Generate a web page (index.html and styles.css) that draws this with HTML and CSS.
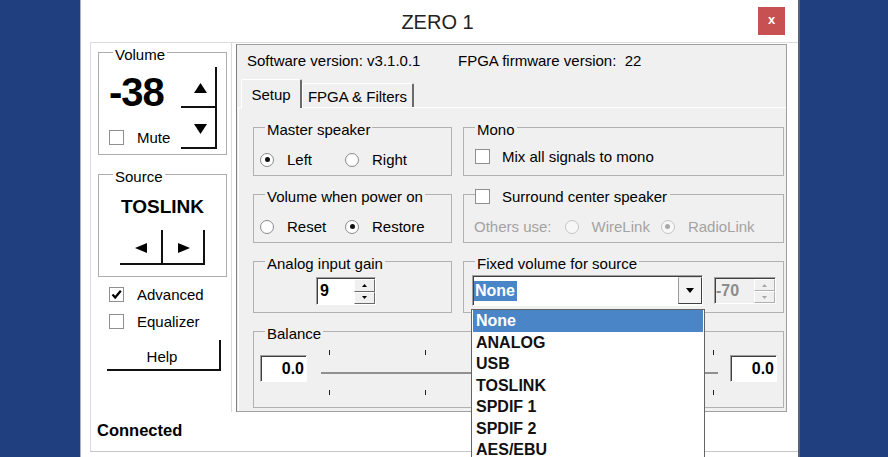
FILE: index.html
```html
<!DOCTYPE html>
<html lang="en">
<head>
<meta charset="utf-8">
<title>ZERO 1</title>
<link rel="stylesheet" href="styles.css">
</head>
<body>
<div class="window">
  <div class="titlebar">
    <div class="title">ZERO 1</div>
    <div class="close">x</div>
  </div>
  <div class="client">
    <div class="top">
      <div class="leftcol">
        <div class="lgroup volume">
          <div class="legend">Volume</div>
          <div class="vol-body">
            <div class="vol-left">
              <div class="vol-value">-38</div>
              <div class="check mute"><span class="cb"></span><span>Mute</span></div>
            </div>
            <div class="vol-btns">
              <div class="btn3d vbtn up"><svg width="13" height="10" viewBox="0 0 13 10"><polygon points="6.5,0 13,10 0,10"/></svg></div>
              <div class="btn3d vbtn down"><svg width="13" height="10" viewBox="0 0 13 10"><polygon points="0,0 13,0 6.5,10"/></svg></div>
            </div>
          </div>
        </div>
        <div class="lgroup source">
          <div class="legend">Source</div>
          <div class="src-name">TOSLINK</div>
          <div class="src-btns">
            <div class="btn3d sbtn prev"><svg width="12" height="10" viewBox="0 0 12 10"><polygon points="0,5 12,0 12,10"/></svg></div>
            <div class="btn3d sbtn next"><svg width="12" height="10" viewBox="0 0 12 10"><polygon points="0,0 12,5 0,10"/></svg></div>
          </div>
        </div>
        <div class="check adv"><span class="cb"><svg width="13" height="13" viewBox="0 0 13 13"><path d="M2.5 6.5 L5.2 9.5 L10.8 2.8" fill="none" stroke="#000" stroke-width="2.2"/></svg></span><span>Advanced</span></div>
        <div class="check eq"><span class="cb"></span><span>Equalizer</span></div>
        <div class="btn3d help">Help</div>
      </div>
      <div class="panel">
        <div class="info"><span class="sw">Software version: v3.1.0.1</span><span>FPGA firmware version:&nbsp; 22</span></div>
        <div class="tabs"><div class="tab sel">Setup</div><div class="tab">FPGA &amp; Filters</div></div>
        <div class="page">
          <div class="grid">
            <div class="group">
              <div class="legend">Master speaker</div>
              <div class="opts">
                <div class="radio w85"><span class="rb on"></span>Left</div>
                <div class="radio"><span class="rb"></span>Right</div>
              </div>
            </div>
            <div class="group">
              <div class="legend">Mono</div>
              <div class="opts mono"><span class="cb"></span><span class="cbtext">Mix all signals to mono</span></div>
            </div>
            <div class="group">
              <div class="legend">Volume when power on</div>
              <div class="opts">
                <div class="radio w85"><span class="rb"></span>Reset</div>
                <div class="radio"><span class="rb on"></span>Restore</div>
              </div>
            </div>
            <div class="group">
              <div class="legend cbl"><span class="cb"></span><span>Surround center speaker</span></div>
              <div class="opts others dis">
                <span>Others use:</span>
                <div class="radio wire"><span class="rb"></span>WireLink</div>
                <div class="radio radiol"><span class="rb on"></span>RadioLink</div>
              </div>
            </div>
            <div class="group">
              <div class="legend">Analog input gain</div>
              <div class="analog-row">
                <div class="spin">
                  <span class="spin-val">9</span>
                  <span class="spin-btns">
                    <span class="sb"><svg width="5" height="3" viewBox="0 0 5 3"><polygon points="2.5,0 5,3 0,3"/></svg></span>
                    <span class="sb"><svg width="5" height="3" viewBox="0 0 5 3"><polygon points="0,0 5,0 2.5,3"/></svg></span>
                  </span>
                </div>
              </div>
            </div>
            <div class="group">
              <div class="legend">Fixed volume for source</div>
              <div class="fixed-row">
                <div class="combo">
                  <span class="combo-val"><span class="hl">None</span></span>
                  <span class="combo-btn"><svg width="8" height="5" viewBox="0 0 8 5"><polygon points="0,0 8,0 4,5"/></svg></span>
                  <div class="droplist">
                    <div class="item sel">None</div>
                    <div class="item">ANALOG</div>
                    <div class="item">USB</div>
                    <div class="item">TOSLINK</div>
                    <div class="item">SPDIF 1</div>
                    <div class="item">SPDIF 2</div>
                    <div class="item">AES/EBU</div>
                  </div>
                </div>
                <div class="spin disabled">
                  <span class="spin-val">-70</span>
                  <span class="spin-btns">
                    <span class="sb"><svg width="5" height="3" viewBox="0 0 5 3"><polygon points="2.5,0 5,3 0,3"/></svg></span>
                    <span class="sb"><svg width="5" height="3" viewBox="0 0 5 3"><polygon points="0,0 5,0 2.5,3"/></svg></span>
                  </span>
                </div>
              </div>
            </div>
            <div class="group balance">
              <div class="legend">Balance</div>
              <div class="bal-row">
                <div class="numbox">0.0</div>
                <div class="slider">
                  <div class="ticks"><i></i><i></i><i></i><i></i><i></i></div>
                  <div class="track"></div>
                  <div class="ticks"><i></i><i></i><i></i><i></i><i></i></div>
                </div>
                <div class="numbox">0.0</div>
              </div>
            </div>
          </div>
        </div>
      </div>
    </div>
    <div class="status">Connected</div>
  </div>
</div>
</body>
</html>
```
FILE: styles.css
```css
* { box-sizing: border-box; margin: 0; padding: 0; }
html, body { width: 888px; height: 457px; overflow: hidden; }
body {
  background: #1f3f7f;
  font-family: "Liberation Sans", Arial, sans-serif;
  font-size: 15px;
  line-height: 17px;
  color: #000;
}
.window {
  margin-left: 80px;
  width: 720px;
  height: 457px;
  background: #fff;
  border-left: 1px solid #a9b2c2;
  border-right: 2px solid #56627a;
  display: flex;
  flex-direction: column;
}
.titlebar {
  height: 42px;
  display: grid;
  grid-template-columns: 1fr auto 1fr;
  align-items: start;
}
.title {
  grid-column: 2;
  padding: 11px 4px 0 0;
  font-size: 20px;
  line-height: 22px;
  color: #222;
}
.close {
  grid-column: 3;
  justify-self: end;
  margin: 7px 13px 0 0;
  width: 27px;
  height: 28px;
  background: #c75050;
  color: #fff;
  font-size: 13px;
  font-weight: bold;
  line-height: 26px;
  text-align: center;
}
.client {
  margin-left: 9px;
  width: 708px;
  height: 410px;
  border-top: 1px solid #dcdcdc;
  border-left: 1px solid #dcdcdc;
  border-bottom: 1px solid #c6c6c6;
  display: flex;
  flex-direction: column;
}
.top { display: flex; height: 369px; }
.leftcol {
  width: 141px;
  border-right: 1px solid #dadada;
  padding-left: 7px;
  display: flex;
  flex-direction: column;
}
.lgroup {
  width: 129px;
  height: 103px;
  border: 1px solid #adadad;
  display: flex;
  flex-direction: column;
}
.lgroup .legend { background: #fff; margin-left: 14px; }
.legend {
  align-self: flex-start;
  margin: -7px 0 0 11px;
  padding: 0 2px;
  height: 17px;
  line-height: 17px;
  background: #f0f0f0;
  white-space: nowrap;
}
.volume { margin-top: 9px; }
.vol-body { display: flex; }
.vol-left { width: 82px; }
.vol-value {
  margin-top: 9px;
  padding-left: 10px;
  font-size: 40px;
  line-height: 40px;
  font-weight: bold;
  letter-spacing: -1px;
}
.check { display: flex; align-items: center; height: 17px; }
.cb {
  width: 15px;
  height: 15px;
  border: 1px solid #8e8f8f;
  background: #fff;
  display: flex;
  align-items: center;
  justify-content: center;
  flex: none;
}
.check .cb { margin-right: 13px; }
.mute { margin-top: 17px; padding-left: 10px; }
.vol-btns { margin-top: 4px; width: 36px; }
.btn3d {
  background: #fff;
  border-right: 2px solid #111;
  border-bottom: 2px solid #111;
  display: flex;
  align-items: center;
  justify-content: center;
}
.vbtn { height: 41px; padding: 2px 0 0 4px; }
.vbtn.down { padding-top: 3px; }
.source { margin-top: 19px; }
.src-name {
  margin-top: 11px;
  text-align: center;
  font-size: 19px;
  line-height: 22px;
  font-weight: bold;
}
.src-btns { display: flex; margin: 12px 0 0 21px; }
.sbtn { width: 43px; height: 35px; padding: 3px 0 0 0; }
.sbtn.next { width: 42px; padding-left: 2px; }
.adv { margin: 9px 0 0 11px; }
.eq { margin: 10px 0 0 11px; }
.help {
  margin: 10px 0 0 9px;
  width: 114px;
  height: 31px;
  padding: 3px 2px 0 0;
}
.panel {
  margin: 1px 0 0 4px;
  width: 551px;
  height: 368px;
  background: #f0f0f0;
  border-top: 1px solid #a0a0a0;
  border-left: 1px solid #7f7f7f;
  border-right: 1px solid #a0a0a0;
  border-bottom: 1px solid #a0a0a0;
  display: flex;
  flex-direction: column;
}
.info { height: 34px; padding: 7px 0 0 10px; display: flex; white-space: nowrap; }
.info .sw { width: 211px; }
.tabs {
  height: 28px;
  padding-left: 4px;
  display: flex;
  align-items: flex-end;
  position: relative;
  z-index: 1;
}
.tab {
  height: 24px;
  width: 112px;
  padding-top: 4px;
  text-align: center;
  background: #f0f0f0;
  border-top: 1px solid #fff;
  border-left: 1px solid #fff;
  border-right: 2px solid #6a6a6a;
  border-radius: 2px 2px 0 0;
  white-space: nowrap;
}
.tab.sel {
  width: 61px;
  height: 29px;
  margin-bottom: -1px;
  padding-top: 6px;
}
.page {
  flex: 1;
  margin-left: 1px;
  border-top: 1px solid #fff;
  border-left: 1px solid #fff;
  padding: 19px 0 0 14px;
}
.grid {
  display: grid;
  grid-template-columns: 199px 321px;
  column-gap: 11px;
  grid-template-rows: 49px 49px 52px 77px;
  row-gap: 18px;
}
.group {
  border: 1px solid #b1b1b1;
  display: flex;
  flex-direction: column;
  min-width: 0;
}
.opts {
  display: flex;
  align-items: center;
  height: 17px;
  margin-top: 13px;
  padding-left: 6px;
  white-space: nowrap;
}
.radio { display: flex; align-items: center; }
.w85 { width: 85px; }
.rb {
  width: 14px;
  height: 14px;
  border-radius: 50%;
  border: 1px solid #8a8a8a;
  background: #fff;
  margin-right: 13px;
  display: flex;
  align-items: center;
  justify-content: center;
  flex: none;
}
.rb.on::after {
  content: "";
  width: 5px;
  height: 5px;
  border-radius: 50%;
  background: #111;
}
.mono { padding-left: 11px; margin-top: 10px; }
.mono .cb { margin-right: 12px; }
.legend.cbl {
  display: flex;
  align-items: center;
  padding: 0 3px 0 0;
}
.legend.cbl .cb { margin-right: 12px; }
.others { padding-left: 10px; }
.dis { color: #a3a3a3; }
.dis .rb { border-color: #c4c4c4; background: #f7f7f7; }
.dis .rb.on::after { background: #a8a8a8; }
.wire { margin-left: 13px; }
.radiol { margin-left: 11px; }
.analog-row { margin-top: 5px; padding-left: 62px; }
.spin {
  display: flex;
  width: 60px;
  height: 28px;
  background: #fff;
  border: 1px solid;
  border-color: #a0a0a0 #fff #fff #a0a0a0;
  box-shadow: inset 1px 1px 0 #404040;
}
.spin-val {
  flex: 1;
  padding: 0 0 0 3px;
  font-size: 16px;
  font-weight: bold;
  line-height: 26px;
}
.spin-btns {
  width: 21px;
  display: flex;
  flex-direction: column;
  margin: 1px 0 0 0;
}
.sb {
  flex: 1;
  background: #f0f0f0;
  border: 1px solid;
  border-color: #fff #6a6a6a #6a6a6a #fff;
  display: flex;
  align-items: center;
  justify-content: center;
}
.spin.disabled { width: 62px; height: 27px; background: #f0f0f0; }
.spin.disabled .spin-val { color: #8c8c8c; padding-left: 1px; line-height: 25px; }
.spin.disabled .sb { border-color: #fff #b0b0b0 #b0b0b0 #fff; }
.spin.disabled polygon { fill: #a8a8a8; }
.fixed-row {
  display: flex;
  align-items: center;
  margin-top: 3px;
  padding-left: 8px;
}
.combo {
  position: relative;
  width: 231px;
  height: 31px;
  margin-right: 11px;
  display: flex;
  background: #fff;
  border: 1px solid;
  border-color: #a0a0a0 #fff #fff #a0a0a0;
  box-shadow: inset 1px 1px 0 #404040;
  z-index: 2;
}
.combo-val { flex: 1; display: flex; align-items: center; padding-left: 1px; }
.hl {
  background: #4a85c7;
  color: #fff;
  font-size: 16px;
  font-weight: bold;
  line-height: 20px;
  padding: 0 2px 0 1px;
}
.combo-btn {
  width: 24px;
  margin: 1px 0;
  background: #f4f4f4;
  border: 1px solid;
  border-color: #dcdcdc #404040 #404040 #9a9a9a;
  display: flex;
  align-items: center;
  justify-content: center;
}
.droplist {
  position: absolute;
  left: -2px;
  top: 33px;
  width: 234px;
  height: 160px;
  background: #fff;
  border: 1px solid #646464;
}
.item {
  margin: 0 1px;
  padding-left: 3px;
  font-size: 16px;
  font-weight: bold;
  line-height: 21.5px;
  color: #111;
}
.item.sel { background: #4a85c7; color: #fff; }
.balance { grid-column: 1 / -1; }
.bal-row {
  display: flex;
  align-items: flex-start;
  margin-top: 13px;
  padding-left: 6px;
}
.numbox {
  width: 47px;
  height: 27px;
  background: #fff;
  border: 1px solid;
  border-color: #a0a0a0 #fff #fff #a0a0a0;
  box-shadow: inset 1px 1px 0 #404040;
  text-align: right;
  padding-right: 2px;
  font-size: 16px;
  font-weight: bold;
  line-height: 25px;
}
.slider {
  width: 397px;
  height: 45px;
  margin: -5px 12px 0 14px;
  display: flex;
  flex-direction: column;
  justify-content: space-between;
}
.ticks { display: flex; justify-content: space-between; padding: 0 4px 0 8px; }
.ticks i { width: 1px; height: 5px; background: #222; }
.track { height: 2px; background: #909090; }
.status {
  height: 39px;
  padding: 0 0 3px 6px;
  display: flex;
  align-items: center;
  font-size: 16.5px;
  font-weight: bold;
}
```
